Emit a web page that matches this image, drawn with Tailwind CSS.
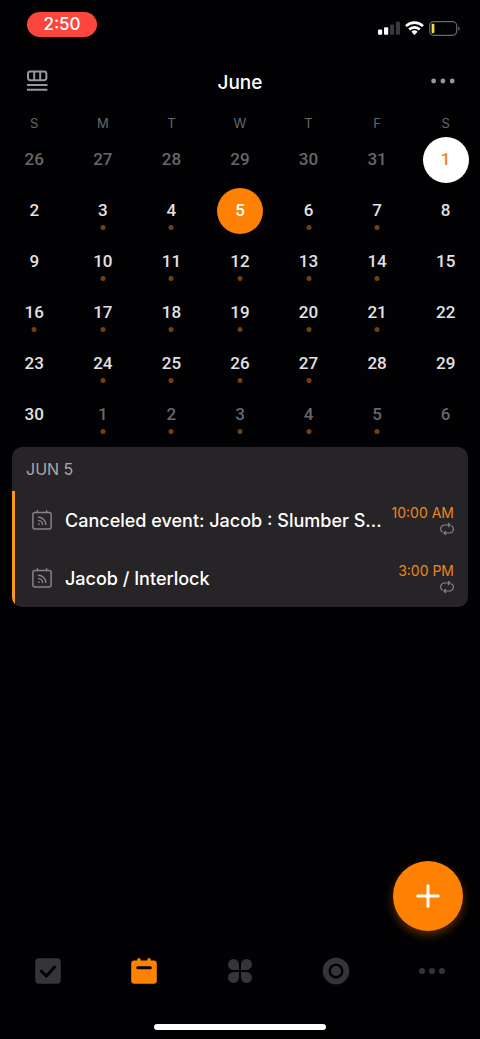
<!DOCTYPE html>
<html lang="en">
<head>
<meta charset="utf-8">
<meta name="viewport" content="width=device-width, initial-scale=1">
<title>June</title>
<script src="https://cdn.jsdelivr.net/npm/@tailwindcss/browser@4"></script>
</head>
<body class="relative flex min-h-screen flex-col bg-[#020103] font-['Inter','Roboto',sans-serif] text-white">
  <div class="flex h-14 items-center justify-between pr-5 pl-[27px]">
    <span class="mb-2 flex h-[25px] w-[70px] items-center justify-center rounded-full bg-[#fb453d] pt-[2px] text-[17px] font-medium">2:50</span>
    <div class="flex items-center gap-[5px]">
      <svg class="h-[14px] w-[22px]" viewBox="0 0 22 14" fill="#fff" aria-label="Signal"><rect y="8.5" width="4.2" height="5.2" rx="1"/><rect x="6" y="6.3" width="4.2" height="7.4" rx="1"/><g fill="#3a383c"><rect x="12" y="3.4" width="4.2" height="10.3" rx="1"/><rect x="18" y=".5" width="4" height="13.2" rx="1"/></g></svg>
      <svg class="h-[14px] w-[19px]" viewBox="0 0 19 14" fill="none" stroke="#fff" stroke-width="2.7" aria-label="Wi-Fi"><path d="M1 5.1a12.2 12.2 0 0 1 17 0M4.2 8.5a7.6 7.6 0 0 1 10.6 0"/><path d="M6.4 10.8a4.5 4.5 0 0 1 6.2 0L9.5 13.9z" fill="#fff" stroke="none"/></svg>
      <svg class="h-[15px] w-[31px]" viewBox="0 0 31 15" aria-label="Battery"><rect x=".7" y=".7" width="27" height="13.6" rx="4" fill="none" stroke="#69676b" stroke-width="1.2"/><rect x="2.6" y="2.7" width="2.8" height="9.6" rx="1.2" fill="#f7dc3c"/><path d="M29.2 5.4c2 .6 2 3.6 0 4.2z" fill="#69676b"/></svg>
    </div>
  </div>

  <header class="grid h-[54px] grid-cols-3 items-center px-[25px]">
    <button class="flex size-6 items-center justify-center justify-self-start" aria-label="Change view">
      <svg class="mb-1 h-[22px] w-[22px]" viewBox="0 0 22 22" fill="none" stroke="#99979c" stroke-width="2"><rect x="2" y="1.6" width="18.4" height="8.6" rx="2.4"/><path d="M8.2 1.6v8.6M14.2 1.6v8.6M1 15h20.4M1 19.8h20.4"/></svg>
    </button>
    <h1 class="justify-self-center text-[19px] font-medium">June</h1>
    <button class="flex items-center justify-self-end" aria-label="More options">
      <svg class="mb-1 h-[6px] w-6" viewBox="0 0 24 6" fill="#99979c"><circle cx="2.6" cy="3" r="2.4"/><circle cx="11.9" cy="3" r="2.4"/><circle cx="21.2" cy="3" r="2.4"/></svg>
    </button>
  </header>

  <table class="w-full table-fixed border-collapse">
    <thead>
      <tr class="h-6 text-[13px] text-[#69676b]" id="weekdays"></tr>
    </thead>
    <tbody id="days" class="font-['Roboto',sans-serif]"></tbody>
  </table>

  <section class="mx-3 mt-[7px] overflow-hidden rounded-[10px] bg-[#272427]">
    <h2 class="px-[14px] py-[10px] text-[16px] leading-6 text-[#aaa8ac]">JUN 5</h2>
    <ul class="border-l-[3px] border-[#f9981b]" id="events"></ul>
  </section>

  <button class="absolute right-[17px] bottom-[108px] flex size-[70px] items-center justify-center rounded-full bg-[#ff8103] shadow-[0_4px_10px_rgba(255,129,3,0.35)]" aria-label="Add task">
    <svg class="size-6" viewBox="0 0 24 24" stroke="#fff" stroke-width="3" stroke-linecap="round"><path d="M12 1.7v20.6M1.7 12h20.6"/></svg>
  </button>

  <nav class="mt-auto grid grid-cols-5 justify-items-center pb-[39px] text-[#363438]">
    <button aria-label="Tasks"><svg class="size-7" viewBox="0 0 28 28"><rect x="1.2" y="1.2" width="25.6" height="25.6" rx="4" fill="currentColor"/><path d="M7.5 14.2l4.9 4.9 8.3-9" fill="none" stroke="#020103" stroke-width="3" stroke-linecap="round" stroke-linejoin="round"/></svg></button>
    <button class="text-[#ff8103]" aria-label="Calendar"><svg class="size-7" viewBox="0 0 28 28"><path d="M4.2 3.6h3V2.6a1.7 1.7 0 0 1 3.4 0v1h6.8v-1a1.7 1.7 0 0 1 3.4 0v1h3a3 3 0 0 1 3 3v17.2a3 3 0 0 1-3 3H4.2a3 3 0 0 1-3-3V6.6a3 3 0 0 1 3-3z" fill="currentColor"/><path d="M7.8 10.8h12.5" stroke="#020103" stroke-width="3" stroke-linecap="round"/></svg></button>
    <button aria-label="Matrix"><svg class="size-7" viewBox="0 0 28 28" fill="currentColor"><path d="M13 13H7.5A5.5 5.5 0 1 1 13 7.4zM15 13V7.4A5.5 5.5 0 1 1 20.6 13zM13 15v5.6A5.5 5.5 0 1 1 7.5 15zM15 15h5.6A5.5 5.5 0 1 1 15 20.6z"/></svg></button>
    <button aria-label="Focus"><svg class="size-7" viewBox="0 0 28 28"><circle cx="14" cy="14" r="10.4" fill="none" stroke="currentColor" stroke-width="5.8"/><circle cx="14" cy="14" r="5.1" fill="currentColor"/></svg></button>
    <button aria-label="More"><svg class="size-7" viewBox="0 0 28 28" fill="currentColor"><circle cx="4" cy="14" r="3"/><circle cx="14" cy="14" r="3"/><circle cx="24" cy="14" r="3"/></svg></button>
  </nav>
  <div class="mx-auto mb-[9px] h-[6px] w-[172px] rounded-full bg-white"></div>

  <script>
    document.getElementById('weekdays').innerHTML =
      ['S', 'M', 'T', 'W', 'T', 'F', 'S'].map(d => `<th scope="col" class="p-0 pt-1 font-normal">${d}</th>`).join('');

    const first = new Date(2024, 4, 26);
    const weeksWithDots = ['0000000', '0110110', '0111110', '1111110', '0111100', '0111110'];
    document.getElementById('days').innerHTML = weeksWithDots.map((dots, w) => '<tr class="h-[51px]">' + [...dots].map((dot, d) => {
      const date = new Date(first.getFullYear(), first.getMonth(), first.getDate() + w * 7 + d);
      const n = date.getDate();
      const inMonth = date.getMonth() === 5;
      let look = inMonth ? 'text-[#e3e1e4]' : 'text-[#69676b]';
      if (inMonth && n === 1) look = 'bg-white text-[#ec8420]';
      if (inMonth && n === 5) look = 'bg-[#ff8103] text-white';
      const mark = dot === '1' && !(inMonth && n === 5)
        ? '<span class="absolute bottom-1 left-1/2 size-[5px] -translate-x-1/2 rounded-full bg-[#74400f]"></span>' : '';
      return `<td class="p-0"><button class="relative mx-auto flex size-[46px] items-center justify-center rounded-full text-[17px] font-medium ${look}">${n}${mark}</button></td>`;
    }).join('') + '</tr>').join('');

    const events = [
      ['Canceled event: Jacob : Slumber S...', '10:00 AM'],
      ['Jacob / Interlock', '3:00 PM'],
    ];
    document.getElementById('events').innerHTML = events.map(([title, time]) => `
      <li class="flex h-[58px] items-center pr-[14px] pl-[17px]">
        <svg class="mr-[13px] size-5 shrink-0" viewBox="0 0 20 20" fill="none" stroke="#858387" stroke-width="1.5" stroke-linecap="round"><rect x=".9" y="2.6" width="18.2" height="16.5" rx="2"/><path d="M5.4.8v1.8M14.6.8v1.8"/><path d="M6.5 7.3a7.3 7.3 0 0 1 7.3 7.3M6.5 10.6a4 4 0 0 1 4 4" stroke-width="1.4"/><circle cx="7" cy="14.1" r=".9" fill="#858387" stroke="none"/></svg>
        <span class="min-w-0 flex-1 truncate text-[18px] font-medium">${title}</span>
        <span class="ml-2 flex shrink-0 flex-col items-end text-[14px] leading-4 text-[#ec8420]">${time}
          <svg class="mt-[1px] h-[14px] w-[14px]" viewBox="0 0 14 14" fill="none" stroke="#858387" stroke-width="1.2" stroke-linecap="round" stroke-linejoin="round" aria-label="Repeats"><path d="M2.2 10A3.9 3.9 0 0 1 4.2 3h5.2M8.4 1.4L10 3 8.4 4.6M11.8 4a3.9 3.9 0 0 1-2 7H4.6M5.6 9.4L4 11l1.6 1.6"/></svg>
        </span>
      </li>`).join('');
  </script>
</body>
</html>
